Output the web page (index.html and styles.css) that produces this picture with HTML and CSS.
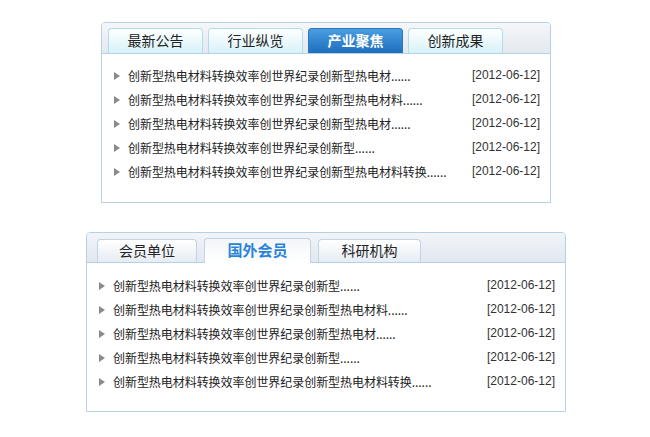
FILE: index.html
```html
<!DOCTYPE html>
<html lang="zh">
<head>
<meta charset="utf-8">
<title>tabs</title>
<link rel="stylesheet" href="styles.css">
</head>
<body>
<div class="box box-a">
  <div class="head">
    <div class="tab">最新公告</div>
    <div class="tab">行业纵览</div>
    <div class="tab active">产业聚焦</div>
    <div class="tab">创新成果</div>
  </div>
  <ul class="list">
    <li><span class="arrow"></span><span class="title">创新型热电材料转换效率创世界纪录创新型热电材......</span><span class="date">[2012-06-12]</span></li>
    <li><span class="arrow"></span><span class="title">创新型热电材料转换效率创世界纪录创新型热电材料......</span><span class="date">[2012-06-12]</span></li>
    <li><span class="arrow"></span><span class="title">创新型热电材料转换效率创世界纪录创新型热电材......</span><span class="date">[2012-06-12]</span></li>
    <li><span class="arrow"></span><span class="title">创新型热电材料转换效率创世界纪录创新型......</span><span class="date">[2012-06-12]</span></li>
    <li><span class="arrow"></span><span class="title">创新型热电材料转换效率创世界纪录创新型热电材料转换......</span><span class="date">[2012-06-12]</span></li>
  </ul>
</div>
<div class="box box-b">
  <div class="head">
    <div class="tab t1">会员单位</div>
    <div class="tab t2 active">国外会员</div>
    <div class="tab t3">科研机构</div>
  </div>
  <ul class="list">
    <li><span class="arrow"></span><span class="title">创新型热电材料转换效率创世界纪录创新型......</span><span class="date">[2012-06-12]</span></li>
    <li><span class="arrow"></span><span class="title">创新型热电材料转换效率创世界纪录创新型热电材料......</span><span class="date">[2012-06-12]</span></li>
    <li><span class="arrow"></span><span class="title">创新型热电材料转换效率创世界纪录创新型热电材......</span><span class="date">[2012-06-12]</span></li>
    <li><span class="arrow"></span><span class="title">创新型热电材料转换效率创世界纪录创新型......</span><span class="date">[2012-06-12]</span></li>
    <li><span class="arrow"></span><span class="title">创新型热电材料转换效率创世界纪录创新型热电材料转换......</span><span class="date">[2012-06-12]</span></li>
  </ul>
</div>
</body>
</html>
```
FILE: styles.css
```css
html, body {
  margin: 0;
  padding: 0;
  background: #fff;
}
body {
  padding-top: 22px;
  font-family: "Noto Sans CJK SC", "Liberation Sans", sans-serif;
  font-size: 12px;
  color: #222;
}
.box {
  box-sizing: border-box;
  border: 1px solid #b7d0ea;
  border-radius: 4px 4px 0 0;
  background: #fff;
}
.box-a {
  width: 450px;
  height: 181px;
  margin-left: 101px;
}
.box-b {
  width: 480px;
  height: 180px;
  margin-left: 86px;
  margin-top: 29px;
}
.head {
  display: flex;
  align-items: flex-end;
  box-sizing: border-box;
  border-bottom: 1px solid #b7d0ea;
  border-radius: 3px 3px 0 0;
}
.box-a .head {
  height: 31px;
  padding-left: 6px;
  gap: 5px;
  background: linear-gradient(#f4f6f9, #e4e9f0);
}
.box-b .head {
  height: 30px;
  padding-left: 10px;
  background: linear-gradient(#f1f4f8, #e2e8f0);
}
.tab {
  box-sizing: border-box;
  display: flex;
  align-items: center;
  justify-content: center;
  padding-bottom: 2px;
  font-size: 14px;
  color: #222;
  border: 1px solid #b3dce9;
  border-bottom: none;
  border-radius: 4px 4px 0 0;
}
.box-a .tab {
  width: 95px;
  height: 25px;
  background: linear-gradient(#ffffff, #d7f2f9);
}
.box-a .tab.active {
  width: 95px;
  border-color: #2a77c2;
  background: linear-gradient(#4a9ee0, #1d6ebe);
  color: #fff;
  font-weight: bold;
}
.box-b .tab {
  height: 23px;
  margin-right: 7px;
  border-color: #c3d3e4;
  background: linear-gradient(#ffffff, #e6ecf3);
}
.box-b .t1 { width: 100px; }
.box-b .t2 { width: 107px; }
.box-b .t3 { width: 103px; }
.box-b .tab.active {
  height: 25px;
  margin-bottom: -1px;
  padding-bottom: 3px;
  background: linear-gradient(#f3f6fa, #ffffff);
  color: #2a84d6;
  font-weight: bold;
  font-size: 15px;
}
.list {
  list-style: none;
  margin: 0;
  padding: 9px 10px 0 12px;
}
.box-b .list {
  padding: 10px 10px 0 12px;
}
.list li {
  display: flex;
  align-items: center;
  height: 24px;
}
.arrow {
  width: 0;
  height: 0;
  border-style: solid;
  border-width: 4px 0 4px 6px;
  border-color: transparent transparent transparent #8a8a8a;
  margin-right: 8px;
  margin-top: 1px;
}
.title {
  flex: 1;
  white-space: nowrap;
  letter-spacing: -0.05px;
}
.date {
  font-family: "Liberation Sans", Arial, sans-serif;
  font-size: 12px;
  color: #333;
}
```
